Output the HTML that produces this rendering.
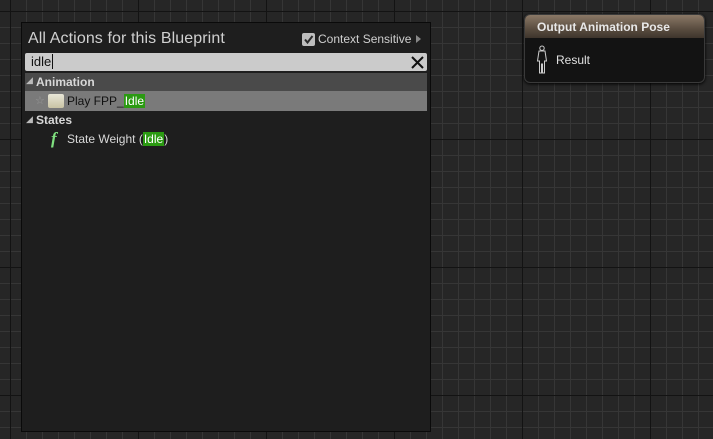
<!DOCTYPE html>
<html><head><style>
*{margin:0;padding:0;box-sizing:border-box}
body{width:713px;height:439px;overflow:hidden;position:relative;font-family:"Liberation Sans",sans-serif;
background-color:#262626;
background-image:
linear-gradient(90deg,#131313 1px,transparent 1px),
linear-gradient(0deg,#131313 1px,transparent 1px),
linear-gradient(90deg,#363636 1px,transparent 1px),
linear-gradient(0deg,#363636 1px,transparent 1px);
background-size:128px 128px,128px 128px,16px 16px,16px 16px;
background-position:10px 12px,10px 12px,10px 12px,10px 12px;}
.panel{position:absolute;left:21px;top:22px;width:410px;height:410px;background:#1e1e1e;border:1px solid #0a0a0a}
.t{position:absolute;color:#d8d8d8;white-space:nowrap}
.hl{background:#2b9a12;color:#fff;padding:0 1px}
.node{position:absolute;left:524px;top:14px;width:181px;height:69px;border-radius:6px;background:#131313;border:1px solid #3a3a3a;overflow:hidden;box-shadow:0 1px 3px #000}
.nh{height:23px;background:linear-gradient(180deg,#8a7866,#5a4d40 60%,#3e352c);color:#e8e8e8;font-weight:bold;font-size:12px;padding:5px 0 0 12px}
</style></head><body>
<div class="panel">
<div class="t" style="left:6px;top:7px;font-size:16px;color:#d0d0d0;letter-spacing:0.1px">All Actions for this Blueprint</div>
<div style="position:absolute;left:280px;top:10px;width:13px;height:13px;background:#bdbdbd;border-radius:2px"></div>
<svg style="position:absolute;left:281px;top:11px" width="11" height="11"><path d="M2 5.5 L4.5 8.5 L9.5 2" stroke="#2a2a2a" stroke-width="2" fill="none"/></svg>
<div class="t" style="left:296px;top:9px;font-size:12px;color:#cfcfcf">Context Sensitive</div>
<div style="position:absolute;left:394px;top:12px;width:0;height:0;border-left:5px solid #888;border-top:4px solid transparent;border-bottom:4px solid transparent"></div>
<div style="position:absolute;left:3px;top:30px;width:402px;height:18px;background:#cbcbcb;border-radius:2px"></div>
<div class="t" style="left:9px;top:31px;font-size:13px;color:#111">idle<span style="border-left:1px solid #111;margin-left:1px"></span></div>
<svg style="position:absolute;left:389px;top:33px" width="13" height="13"><path d="M1 1L12 12M12 1L1 12" stroke="#111" stroke-width="2"/></svg>
<div style="position:absolute;left:3px;top:50px;width:402px;height:18px;background:#4a4a4a"></div>
<div class="t" style="left:4px;top:52px;font-size:9px;color:#bbb">◢</div>
<div class="t" style="left:14px;top:52px;font-size:12px;font-weight:bold;color:#d8d8d8">Animation</div>
<div style="position:absolute;left:3px;top:68px;width:402px;height:20px;background:#7a7a7a"></div>
<div class="t" style="left:13px;top:71px;font-size:11px;color:#999">☆</div>
<div style="position:absolute;left:26px;top:71px;width:16px;height:14px;background:linear-gradient(#e8e6d8,#c9c3a4);border-radius:2px"></div>
<div class="t" style="left:45px;top:71px;font-size:12px;color:#111">Play FPP_<span class="hl">Idle</span></div>
<div class="t" style="left:4px;top:91px;font-size:9px;color:#bbb">◢</div>
<div class="t" style="left:14px;top:90px;font-size:12px;font-weight:bold;color:#d8d8d8">States</div>
<div class="t" style="left:29px;top:106px;font-size:17px;font-style:italic;font-weight:bold;color:#7fe07f;font-family:'Liberation Serif',serif">f</div>
<div class="t" style="left:45px;top:109px;font-size:12px;color:#d8d8d8">State Weight (<span class="hl">Idle</span>)</div>
</div>
<div class="node"><div class="nh">Output Animation Pose</div>
<svg style="position:absolute;left:11px;top:30px" width="12" height="30"><path d="M6 1a2.2 2.2 0 1 1 0 4.4a2.2 2.2 0 1 1 0-4.4M3 6h6l1.5 10h-2v12h-2v-9h-1v9h-2V16h-2z" fill="none" stroke="#ccc" stroke-width="1"/></svg>
<div class="t" style="left:31px;top:38px;font-size:12px;color:#e0e0e0">Result</div>
</div>
</body></html>
